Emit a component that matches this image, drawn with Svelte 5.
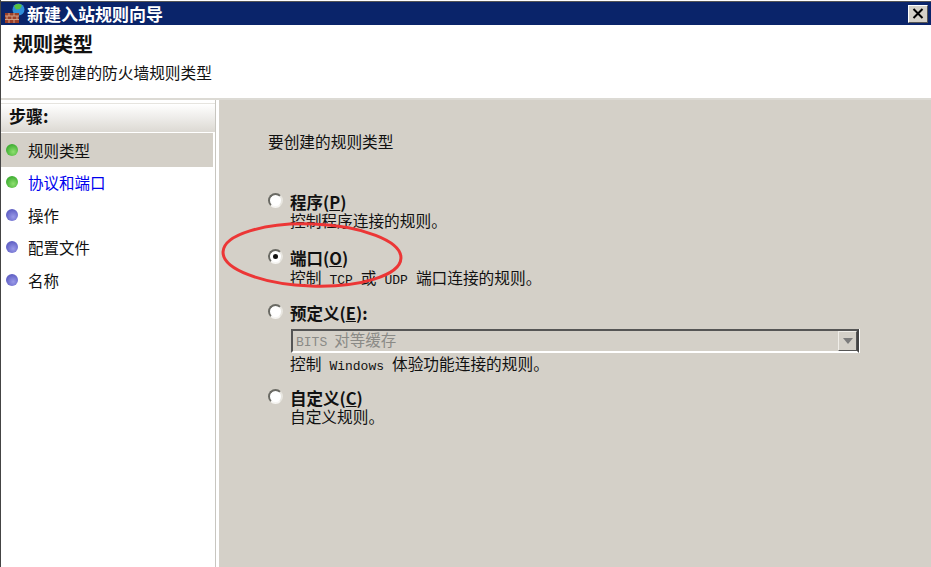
<script lang="ts">
  const steps = [
    { label: '规则类型', state: 'done', selected: true },
    { label: '协议和端口', state: 'done', link: true },
    { label: '操作', state: 'todo' },
    { label: '配置文件', state: 'todo' },
    { label: '名称', state: 'todo' },
  ];
</script>

<div class="window">
  <div class="titlebar">
    <svg class="app-icon" width="20" height="21" viewBox="0 0 20 21">
      <circle cx="13.500" cy="6.500" r="6" fill="#2f8fd8" />
      <path d="M9 3c2-2.500 6-2.500 8-.5l-2 3.500-4 .5z" fill="#58c040" />
      <path d="M0 10h14v10H0z" fill="#9c4028" />
      <path d="M0 13h14M0 16.500h14M4 10v3M9 10v3M2 13v3.500M7 13v3.500M12 13v3.500M4 16.500V20M9 16.500V20" stroke="#d0a088" stroke-width="1" fill="none" />
    </svg>
    <span class="title">新建入站规则向导</span>
    <button class="close" type="button" aria-label="关闭">
      <svg width="12" height="11" viewBox="0 0 12 11"><path d="M1.500 1l9 9M10.500 1l-9 9" stroke="#000" stroke-width="2" fill="none" /></svg>
    </button>
  </div>

  <header class="head">
    <h1>规则类型</h1>
    <p>选择要创建的防火墙规则类型</p>
  </header>

  <div class="body">
    <aside class="side">
      <div class="side-head">步骤:</div>
      <ul>
        {#each steps as s}
          <li class:selected={s.selected} class:link={s.link}>
            <span class="dot {s.state}"></span>
            <span>{s.label}</span>
          </li>
        {/each}
      </ul>
    </aside>

    <main class="content">
      <div class="prompt">要创建的规则类型</div>

      <div class="option first">
        <span class="radio"></span>
        <div>
          <div class="name">程序(<u>P</u>)</div>
          <div class="desc">控制程序连接的规则。</div>
        </div>
      </div>

      <div class="option second">
        <span class="radio checked"></span>
        <div>
          <div class="name">端口(<u>O</u>)</div>
          <div class="desc low">控制<span class="mono">TCP</span>或<span class="mono">UDP</span>端口连接的规则。</div>
        </div>
      </div>

      <div class="option third">
        <span class="radio"></span>
        <div class="grow">
          <div class="name">预定义(<u>E</u>):</div>
          <div class="select">
            <span class="value"><span class="mono bits">BITS</span>对等缓存</span>
            <span class="arrow"><i></i></span>
          </div>
          <div class="desc">控制<span class="mono">Windows</span>体验功能连接的规则。</div>
        </div>
      </div>

      <div class="option">
        <span class="radio"></span>
        <div>
          <div class="name">自定义(<u>C</u>)</div>
          <div class="desc">自定义规则。</div>
        </div>
      </div>
    </main>
  </div>

  <svg class="circle" width="200" height="80" viewBox="0 0 200 80">
    <ellipse cx="100" cy="37" rx="89" ry="31" transform="rotate(2 100 37)" fill="none" stroke="#ec3636" stroke-width="3" />
  </svg>
</div>

<style>
  :global(body) {
    margin: 0;
    background: #fff;
  }

  .window {
    position: relative;
    width: 931px;
    height: 567px;
    overflow: hidden;
    box-sizing: border-box;
    border-left: 1px solid #444;
    background: #fff;
    font-family: "Noto Sans CJK SC", "Liberation Sans", sans-serif;
    font-size: 16px;
    color: #111;
  }

  .titlebar {
    display: flex;
    align-items: center;
    height: 24px;
    margin-top: 1px;
    padding: 0 3px 0 4px;
    background: #0a246a;
    color: #fff;
    border-top: 1px solid #555;
    box-sizing: border-box;
  }

  .app-icon {
    flex: none;
    margin-right: 2px;
  }

  .title {
    flex: 1;
    font-size: 17px;
    font-weight: 700;
    line-height: 22px;
  }

  .close {
    width: 20px;
    height: 18px;
    padding: 0;
    display: flex;
    align-items: center;
    justify-content: center;
    background: #d4d0c8;
    border: 1px solid;
    border-color: #fff #555 #555 #fff;
  }

  .head {
    height: 75px;
    box-sizing: border-box;
    padding-top: 7px;
    border-bottom: 2px solid #dcdad4;
  }

  h1 {
    margin: 0 0 0 12px;
    font-size: 20px;
    font-weight: 700;
    line-height: 24px;
  }

  .head p {
    margin: 6px 0 0 7px;
    font-size: 15.700px;
    line-height: 22px;
  }

  .body {
    display: flex;
    height: 467px;
  }

  .side {
    width: 215px;
    flex: none;
    box-sizing: border-box;
    padding-top: 3px;
    border-right: 1px solid #c8c6c0;
    margin-right: 3px;
  }

  .side-head {
    height: 29px;
    padding-left: 8px;
    font-weight: 700;
    font-size: 17px;
    line-height: 24px;
    background: linear-gradient(#fff, #dcd9d3);
    box-sizing: border-box;
    border-top: 1px solid #e6e4df;
  }

  ul {
    list-style: none;
    margin: 1px 0 0;
    padding: 0;
  }

  li {
    display: flex;
    align-items: center;
    gap: 10px;
    box-sizing: border-box;
    height: 32.600px;
    padding: 0 0 2px 5px;
    font-size: 15.500px;
  }

  li.selected {
    height: 34px;
    padding-bottom: 1px;
    background: #d4d0c8;
    margin-right: 2px;
  }

  li.link {
    color: #0000ee;
  }

  .dot {
    flex: none;
    width: 12px;
    height: 12px;
    border-radius: 50%;
  }

  .dot.done {
    background: radial-gradient(circle at 60% 65%, #8fe070, #3fae33 70%, #8cbf80);
  }

  .dot.todo {
    background: radial-gradient(circle at 60% 65%, #9a9ae8, #5f5fc4 70%, #9c9cc8);
  }

  .content {
    flex: 1;
    background: #d4d0c8;
    padding: 31px 72px 0 49px;
  }

  .prompt {
    font-size: 15.700px;
    line-height: 22px;
  }

  .option {
    display: flex;
    gap: 7px;
    margin-top: 14px;
  }

  .option.first {
    margin-top: 39px;
  }

  .option.second {
    margin-top: 17px;
  }

  .option.third {
    margin-top: 15px;
  }

  .grow {
    flex: 1;
  }

  .radio {
    flex: none;
    position: relative;
    box-sizing: border-box;
    width: 15px;
    height: 15px;
    margin-top: 1px;
    border-radius: 50%;
    background: #fff;
    border: 2px solid;
    border-color: #6a6a64 #e8e6e0 #f6f5f2 #6a6a64;
  }

  .radio.checked::after {
    content: '';
    position: absolute;
    left: 3px;
    top: 3px;
    width: 5px;
    height: 5px;
    border-radius: 50%;
    background: #111;
  }

  .name {
    font-size: 16.500px;
    font-weight: 700;
    line-height: 20px;
    height: 19px;
  }

  .desc {
    height: 20px;
    font-size: 15.700px;
    line-height: 20px;
  }

  .desc.low {
    margin-top: 1px;
  }

  .mono {
    margin: 0 8px;
    font-family: "Liberation Mono", monospace;
    font-size: 13px;
  }

  .mono.bits {
    margin: 0 7px 0 0;
  }

  .select {
    display: flex;
    align-items: center;
    justify-content: space-between;
    height: 24px;
    margin: 7px 0 1px 1px;
    box-sizing: border-box;
    border: 2px solid;
    border-color: #555 #444 #fff #555;
    box-shadow: 1px 0 0 #fff;
    color: #8a8a86;
    font-size: 15.500px;
  }

  .value {
    padding-left: 3px;
    line-height: 20px;
  }

  .arrow {
    width: 19px;
    height: 20px;
    display: flex;
    align-items: center;
    justify-content: center;
    box-sizing: border-box;
    border: 1px solid;
    border-color: #f0eee9 #555 #555 #f0eee9;
  }

  .arrow i {
    width: 0;
    height: 0;
    border-left: 5px solid transparent;
    border-right: 5px solid transparent;
    border-top: 6px solid #7c7c7c;
  }

  .circle {
    position: absolute;
    left: 211px;
    top: 218px;
    pointer-events: none;
  }
</style>
